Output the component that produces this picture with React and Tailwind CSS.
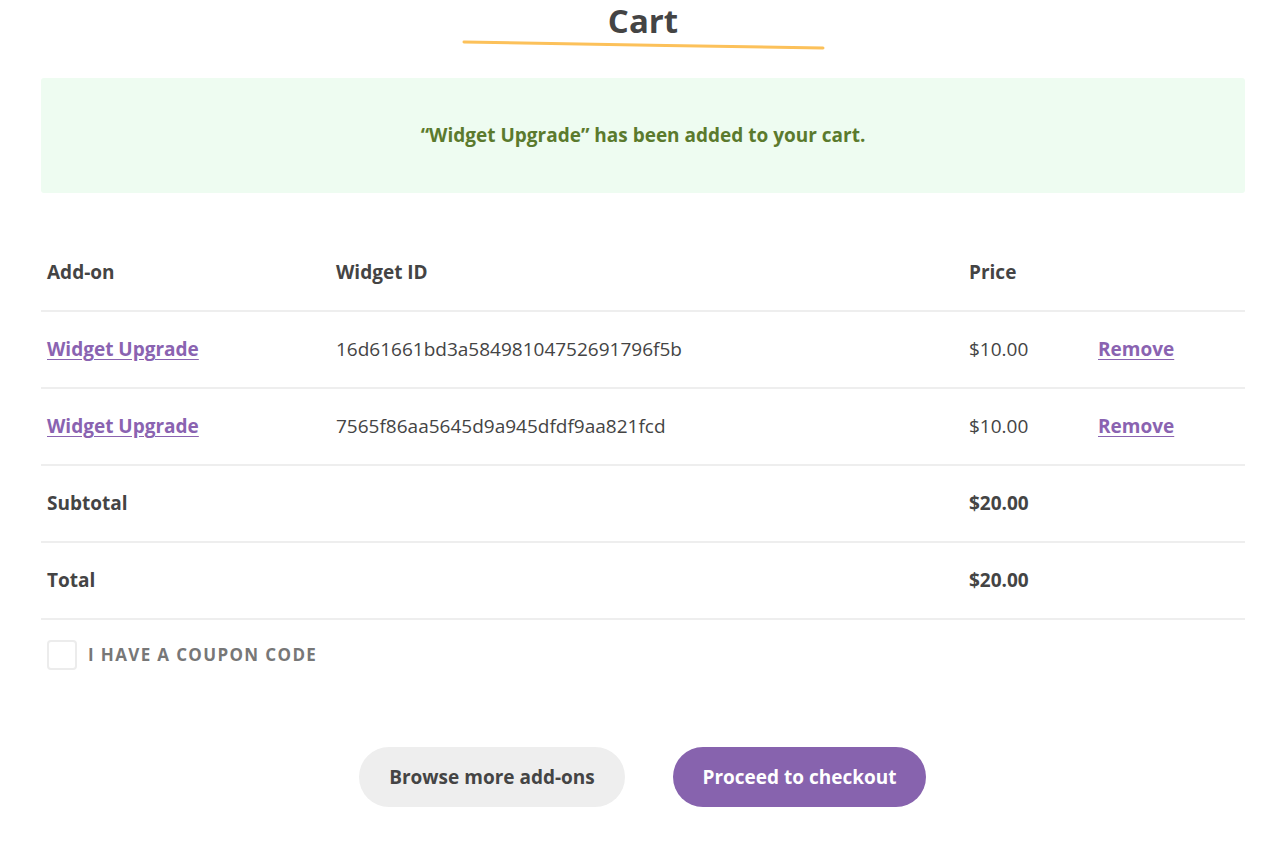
import React from "react";

const rows = [
  { name: "Widget Upgrade", id: "16d61661bd3a58498104752691796f5b", price: "$10.00" },
  { name: "Widget Upgrade", id: "7565f86aa5645d9a945dfdf9aa821fcd", price: "$10.00" },
];

export default function App() {
  return (
    <div className="min-h-screen bg-white text-[#444] font-['Open_Sans','Noto_Sans',sans-serif]">
      <div className="pl-[41px] pr-[35px]">
        {/* heading */}
        <div className="flex flex-col items-center pt-[2px]">
          <h1 className="text-[33px] font-bold leading-[38px] text-[#444]">Cart</h1>
          <svg width="364" height="10" viewBox="0 0 364 10" className="ml-[2px]">
            <path d="M2 2 C 100 4, 250 6, 361 8" stroke="#fcc15a" strokeWidth="3" fill="none" strokeLinecap="round" />
          </svg>
        </div>

        {/* notice */}
        <div className="mt-[28px] h-[115px] bg-[#eefcf1] rounded-[3px] flex items-center justify-center">
          <p className="text-[19px] font-bold text-[#5b7a2d]">“Widget Upgrade” has been added to your cart.</p>
        </div>

        {/* cart table */}
        <table className="w-full mt-[41px] border-collapse text-[19px] table-fixed">
          <thead>
            <tr className="h-[77px] border-b-2 border-[#eeeeee]">
              <th className="text-left font-bold pl-[6px] w-[295px]">Add-on</th>
              <th className="text-left font-bold w-[633px]">Widget ID</th>
              <th className="text-left font-bold w-[129px]">Price</th>
              <th></th>
            </tr>
          </thead>
          <tbody>
            {rows.map((r) => (
              <tr key={r.id} className="h-[77px] border-b-2 border-[#eeeeee]">
                <td className="pl-[6px]">
                  <a href="#" className="font-bold text-[#8a63b1] underline underline-offset-[3px]">{r.name}</a>
                </td>
                <td>{r.id}</td>
                <td>{r.price}</td>
                <td>
                  <a href="#" className="font-bold text-[#8a63b1] underline underline-offset-[3px]">Remove</a>
                </td>
              </tr>
            ))}
            <tr className="h-[77px] border-b-2 border-[#eeeeee]">
              <td className="pl-[6px] font-bold">Subtotal</td>
              <td></td>
              <td className="font-bold">$20.00</td>
              <td></td>
            </tr>
            <tr className="h-[77px] border-b-2 border-[#eeeeee]">
              <td className="pl-[6px] font-bold">Total</td>
              <td></td>
              <td className="font-bold">$20.00</td>
              <td></td>
            </tr>
          </tbody>
        </table>

        {/* coupon */}
        <label className="mt-[20px] ml-[6px] flex items-center gap-[11px]">
          <span className="w-[30px] h-[30px] rounded-[4px] border-2 border-[#ececec] bg-white"></span>
          <span className="text-[17px] font-bold uppercase tracking-[0.08em] text-[#777]">I have a coupon code</span>
        </label>

        {/* actions */}
        <div className="mt-[77px] flex justify-center gap-[48px] pr-[1px]">
          <button className="h-[60px] w-[266px] rounded-full bg-[#eeeeee] text-[19px] font-bold text-[#444]">
            Browse more add-ons
          </button>
          <button className="h-[60px] w-[253px] rounded-full bg-[#8763ae] text-[19px] font-bold text-white">
            Proceed to checkout
          </button>
        </div>
      </div>
    </div>
  );
}
